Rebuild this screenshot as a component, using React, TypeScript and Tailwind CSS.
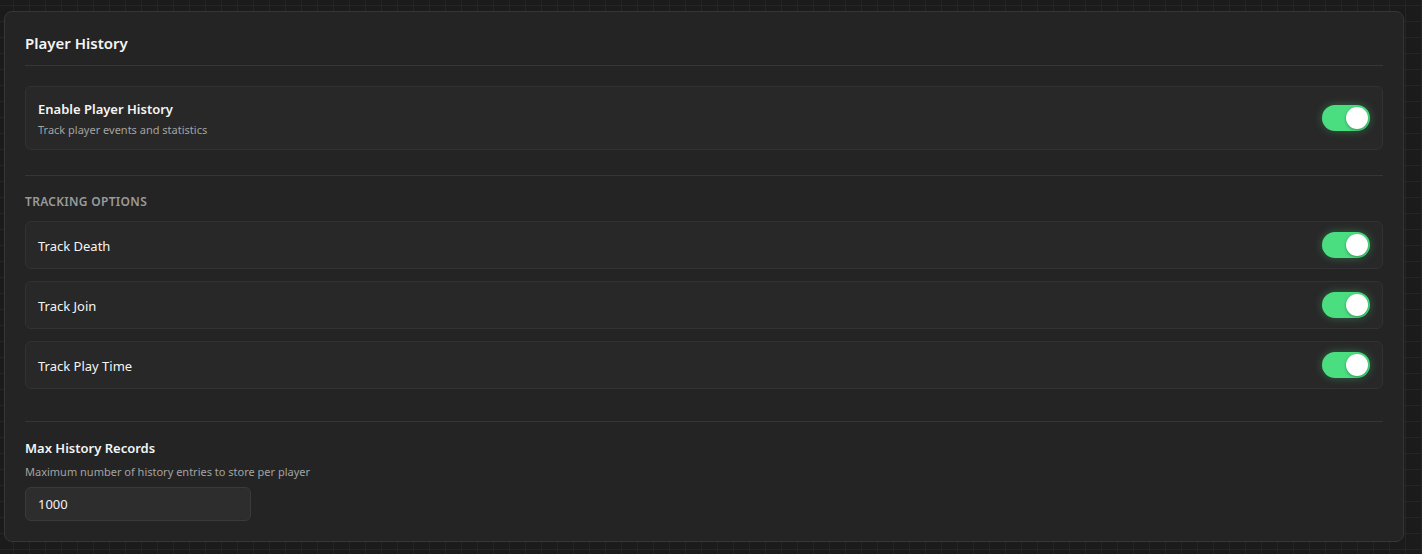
import React, { useState } from 'react';

interface ToggleProps {
  on: boolean;
  onChange: (v: boolean) => void;
}

const Toggle: React.FC<ToggleProps> = ({ on, onChange }) => (
  <button
    onClick={() => onChange(!on)}
    className={
      'relative w-12 h-[26px] rounded-full shrink-0 transition-colors ' +
      (on ? 'bg-[#4ade80] shadow-[0_0_8px_rgba(74,222,128,0.35)]' : 'bg-[#3a3a3a]')
    }
    aria-pressed={on}
  >
    <span
      className={
        'absolute top-[2px] w-[22px] h-[22px] rounded-full bg-white shadow-[0_1px_3px_rgba(0,0,0,0.35)] transition-all ' +
        (on ? 'right-[2px]' : 'left-[2px]')
      }
    />
  </button>
);

const TrackRow: React.FC<{ label: string; on: boolean; onChange: (v: boolean) => void }> = ({ label, on, onChange }) => (
  <div className="flex items-center justify-between h-12 px-3 rounded-md border border-[#323232] bg-[#282828]">
    <span className="pt-[3px] text-[13px] font-normal text-[#f5f5f5]">{label}</span>
    <Toggle on={on} onChange={onChange} />
  </div>
);

export default function App() {
  const [enabled, setEnabled] = useState(true);
  const [death, setDeath] = useState(true);
  const [join, setJoin] = useState(true);
  const [playTime, setPlayTime] = useState(true);
  const [maxRecords, setMaxRecords] = useState('1000');

  return (
    <div className="min-h-screen bg-[#1b1b1b] bg-[linear-gradient(#252525_1px,transparent_1px),linear-gradient(90deg,#252525_1px,transparent_1px)] bg-[size:16px_16px] bg-[position:13px_5px] pl-[4px] pt-[11px] font-['Noto_Sans',sans-serif]">
      <div className="w-[1400px] rounded-lg border border-[#363636] bg-[#242424] p-5">
        <div className="border-b border-[#363636] pb-[11px]">
          <h2 className="text-[15px] leading-[22px] font-semibold text-[#f5f5f5]">Player History</h2>
        </div>

        <div className="mt-5 flex items-center justify-between h-16 px-3 rounded-md border border-[#323232] bg-[#282828]">
          <div className="flex flex-col gap-[3px]">
            <span className="text-[13px] leading-5 font-semibold text-[#f5f5f5]">Enable Player History</span>
            <span className="text-[11px] leading-4 text-[#a3a3a3]">Track player events and statistics</span>
          </div>
          <Toggle on={enabled} onChange={setEnabled} />
        </div>

        <div className="mt-[25px] border-t border-[#363636] pt-[17px]">
          <div className="text-xs leading-[18px] font-semibold tracking-wide text-[#9a9a9a] uppercase mb-[10px]">Tracking Options</div>
          <div className="flex flex-col gap-3">
            <TrackRow label="Track Death" on={death} onChange={setDeath} />
            <TrackRow label="Track Join" on={join} onChange={setJoin} />
            <TrackRow label="Track Play Time" on={playTime} onChange={setPlayTime} />
          </div>
        </div>

        <div className="mt-8 border-t border-[#363636] pt-4">
          <div className="text-[13px] leading-5 font-semibold text-[#f5f5f5]">Max History Records</div>
          <div className="mt-[6px] text-[11px] leading-4 text-[#a3a3a3]">Maximum number of history entries to store per player</div>
          <input
            value={maxRecords}
            onChange={(e) => setMaxRecords(e.target.value)}
            className="mt-[7px] block w-[226px] h-[34px] px-3 rounded-md border border-[#3a3a3a] bg-[#2d2d2d] text-[13px] text-[#f2f2f2] outline-none"
          />
        </div>
      </div>
    </div>
  );
}
